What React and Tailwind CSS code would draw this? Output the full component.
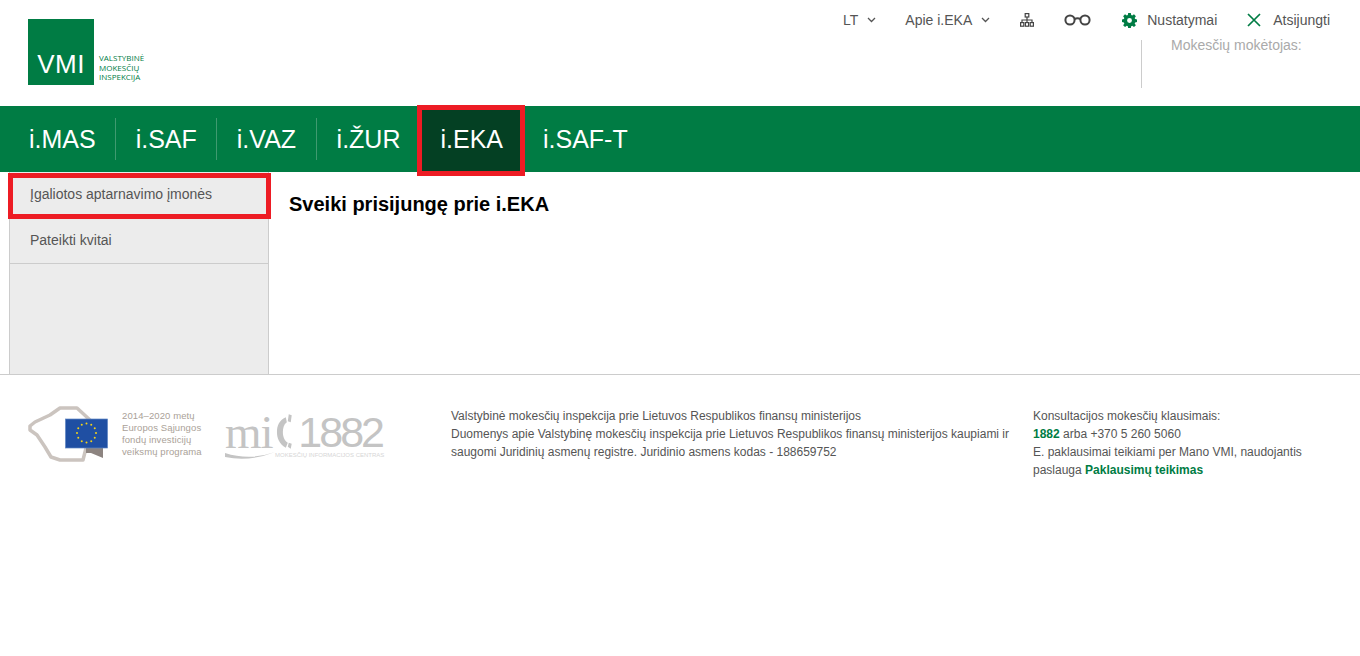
import React from "react";

const Chevron = () => (
  <svg width="9" height="6" viewBox="0 0 9 6" fill="none" stroke="#555" strokeWidth="1.3"><path d="M1 1l3.5 3.5L8 1" /></svg>
);

const OrgIcon = () => (
  <svg width="14" height="14" viewBox="0 0 14 14" fill="none" stroke="#444" strokeWidth="1.2">
    <rect x="5.2" y="0.6" width="3.6" height="3.4" />
    <path d="M7 4V7M2 9.5V7h10v2.5M7 7v2.5" />
    <rect x="0.6" y="9.6" width="3.2" height="3.6" />
    <rect x="5.4" y="9.6" width="3.2" height="3.6" />
    <rect x="10.2" y="9.6" width="3.2" height="3.6" />
  </svg>
);

const Glasses = () => (
  <svg width="27" height="12" viewBox="0 0 27 12" fill="none" stroke="#444" strokeWidth="2">
    <circle cx="6" cy="6" r="4.6" />
    <circle cx="21" cy="6" r="4.6" />
    <path d="M10.5 5q3-1.6 6 0" />
  </svg>
);

const Gear = () => (
  <svg width="15" height="15" viewBox="0 0 16 16" fill="#007c44">
    <path fillRule="evenodd" d="M6.6 0h2.8l.4 2.2 1.1.5L12.8 1.4l2 2-1.3 1.9.5 1.1 2 .4v2.8l-2 .4-.5 1.1 1.3 1.9-2 2-1.9-1.3-1.1.5-.4 2H6.6l-.4-2-1.1-.5-1.9 1.3-2-2 1.3-1.9-.5-1.1-2-.4V6.8l2-.4.5-1.1L1.2 3.4l2-2 1.9 1.3 1.1-.5zM8 5.4a2.6 2.6 0 100 5.2 2.6 2.6 0 000-5.2z" />
  </svg>
);

const Cross = () => (
  <svg width="14" height="14" viewBox="0 0 14 14" fill="none" stroke="#007c44" strokeWidth="1.7"><path d="M1 1l12 12M13 1L1 13" /></svg>
);

const EuLogo = () => {
  const stars = Array.from({ length: 12 }, (_, i) => {
    const a = (i * Math.PI) / 6;
    return <circle key={i} cx={58.5 + 9.5 * Math.sin(a)} cy={28 - 9.5 * Math.cos(a)} r="1" fill="#f2d21b" />;
  });
  return (
    <svg width="82" height="58" viewBox="0 0 82 58" className="shrink-0">
      <path d="M38 18L62 15 49 3 32 3 22 10 7 17 2 21 2 25 9 30 17 42 23 52 32 55 55 55 58 43" fill="none" stroke="#cbc4bf" strokeWidth="3.5" strokeLinejoin="round" />
      <path d="M58 42L75 42 75 53 63 48 58 48z" fill="#8d8480" />
      <rect x="37.5" y="14" width="42" height="29" fill="#1f4fa3" stroke="#5f86c4" strokeWidth="0.7" />
      {stars}
    </svg>
  );
};

const MicLogo = () => (
  <div className="relative h-[52px] w-[157px] shrink-0 text-[#c4c4c4]">
    <div className="flex h-[44px] items-center">
      <span className="mt-[1px] text-[47px] leading-none tracking-[-1px] [font-family:'Liberation_Serif',serif]">mi</span>
      <svg width="18" height="38" viewBox="0 0 18 38" fill="#c4c4c4" className="ml-[2px]">
        <path d="M11 4C4 7 2 13 2 19s2 12 9 16l2-5C9 27 8 23 8 19s1-8 4-10z" />
        <path d="M14 1l3 1-1 7-3-1zM14 30l3 1-1 5-3-2z" />
      </svg>
      <span className="ml-[6px] text-[43px] leading-none tracking-[-3px]">1882</span>
    </div>
    <div className="absolute left-[50px] top-[41px] whitespace-nowrap text-[6px] leading-[8px] text-[#d6d6d6]">MOKESČIŲ INFORMACIJOS CENTRAS</div>
    <svg width="50" height="8" viewBox="0 0 50 8" className="absolute left-0 top-[42px]"><path d="M0 1q25 8 50-1Q25 10 0 5z" fill="#c4c4c4" /></svg>
  </div>
);

const NavItem = ({ children, sep }) => (
  <div className="flex h-full items-center">
    <a className={sep ? "px-[19.5px] leading-none" : "px-5 leading-none"}>{children}</a>
    {sep && <span className="h-[42px] w-px bg-[#3f9a70]" />}
  </div>
);

export default function App() {
  return (
    <div className="min-h-[656px] bg-white text-[14px] text-[#555] [font-family:'Liberation_Sans',Arial,sans-serif]">
      <header className="flex h-[106px] justify-between">
        <div className="ml-[28px] mt-[19px] flex h-[66px] items-end">
          <div className="flex h-[66px] w-[66px] items-end justify-center bg-[#007c44] pb-[8px] text-[26px] font-medium leading-none tracking-[0.5px] text-white">VMI</div>
          <div className="mb-[3px] ml-[5px] text-[8px] leading-[9.6px] text-[#007c44] [font-family:'Open_Sans',sans-serif]">
            <div>VALSTYBINĖ</div>
            <div>MOKESČIŲ</div>
            <div>INSPEKCIJA</div>
          </div>
        </div>
        <div className="flex w-[517px] flex-col">
          <div className="flex h-[40px] items-center">
            <span>LT</span>
            <span className="ml-[9px]"><Chevron /></span>
            <span className="ml-[29px]">Apie i.EKA</span>
            <span className="ml-[9px]"><Chevron /></span>
            <span className="ml-[30px]"><OrgIcon /></span>
            <span className="ml-[30px]"><Glasses /></span>
            <span className="ml-[31px]"><Gear /></span>
            <span className="ml-[10px]">Nustatymai</span>
            <span className="ml-[30px]"><Cross /></span>
            <span className="ml-[12px]">Atsijungti</span>
          </div>
          <div className="ml-[298px] h-[48px] border-l border-[#ccc] pl-[29px] leading-[10px] text-[#aaa]">Mokesčių mokėtojas:</div>
        </div>
      </header>

      <nav className="flex h-[66px] items-center bg-[#007c44] pl-[9.5px] text-[25px] text-white">
        <NavItem sep>i.MAS</NavItem>
        <NavItem sep>i.SAF</NavItem>
        <NavItem sep>i.VAZ</NavItem>
        <NavItem>i.ŽUR</NavItem>
        <div className="relative flex h-full items-center bg-[#044023] px-5 leading-none">
          i.EKA
          <span className="pointer-events-none absolute bottom-[-4px] left-[-3px] right-[-2px] top-[-1px] border-[5px] border-[#ed1c24]" />
        </div>
        <NavItem>i.SAF-T</NavItem>
      </nav>

      <div className="flex h-[202px]">
        <aside className="ml-[9px] w-[260px] border-x border-[#ccc] bg-[#ececec]">
          <div className="relative flex h-[46px] items-center border-b border-[#ccc] pl-[20px]">
            Įgaliotos aptarnavimo įmonės
            <span className="pointer-events-none absolute bottom-[-2px] left-[-2px] right-[-3px] top-[1px] border-[5px] border-[#ed1c24]" />
          </div>
          <div className="flex h-[46px] items-center border-b border-[#ccc] pl-[20px]">Pateikti kvitai</div>
        </aside>
        <main className="pl-[20px] pt-[21px]">
          <h1 className="text-[20px] font-bold leading-[22px] text-black">Sveiki prisijungę prie i.EKA</h1>
        </main>
      </div>

      <footer className="flex border-t border-[#ccc] pt-[32px] text-[12px] leading-[18px]">
        <div className="ml-[28px] -mt-[2px] flex w-[423px] shrink-0 items-start">
          <EuLogo />
          <div className="ml-[12px] mt-[5px] w-[78px] shrink-0 whitespace-nowrap text-[9.5px] leading-[12px] tracking-[0.1px] text-[#aaa198]">
            <div>2014–2020 metų</div>
            <div>Europos Sąjungos</div>
            <div>fondų investicijų</div>
            <div>veiksmų programa</div>
          </div>
          <div className="ml-[25px] mt-[5px]"><MicLogo /></div>
        </div>
        <div className="w-[582px] shrink-0">
          <div>Valstybinė mokesčių inspekcija prie Lietuvos Respublikos finansų ministerijos</div>
          <div>Duomenys apie Valstybinę mokesčių inspekcija prie Lietuvos Respublikos finansų ministerijos kaupiami ir saugomi Juridinių asmenų registre. Juridinio asmens kodas - 188659752</div>
        </div>
        <div className="w-[280px]">
          <div>Konsultacijos mokesčių klausimais:</div>
          <div><b className="text-[#007c44]">1882</b> arba +370 5 260 5060</div>
          <div>E. paklausimai teikiami per Mano VMI, naudojantis paslauga <b className="text-[#007c44]">Paklausimų teikimas</b></div>
        </div>
      </footer>
    </div>
  );
}
